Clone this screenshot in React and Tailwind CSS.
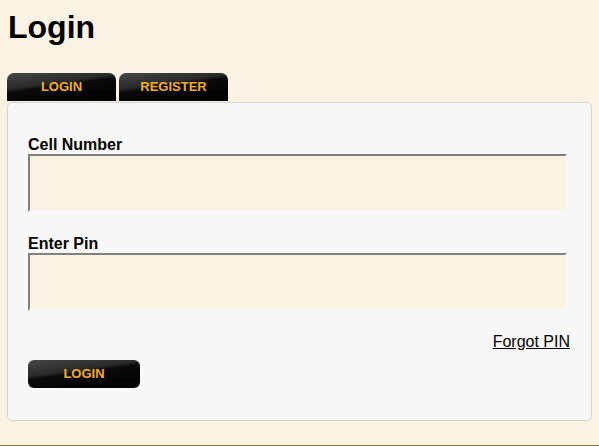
import React from 'react';

const gloss =
  'bg-[linear-gradient(172deg,#474747_0%,#2a2a2a_38%,#0a0a0a_46%,#000_100%)]';

const Tab = ({ label }) => (
  <div
    className={`w-[109px] h-[28px] rounded-t-[7px] ${gloss} flex items-center justify-center text-[13px] font-bold text-[#f4ad22]`}
  >
    {label}
  </div>
);

const Field = ({ label, className = '' }) => (
  <div className={className}>
    <label className="block text-[16px] font-bold text-black leading-[18px]">{label}</label>
    <input
      type="text"
      className="block w-[539px] h-[58px] bg-[#faf3e3] border-2 border-t-[#808080] border-l-[#808080] border-r-[#f8f8f8] border-b-[#f8f8f8] outline-none"
    />
  </div>
);

export default function App() {
  return (
    <div className="w-[599px] h-[446px] bg-[#faf3e3] font-['Liberation_Sans',Arial,sans-serif] flex flex-col">
      <h1 className="text-[32px] font-bold text-black leading-[36px] pl-[8px] pt-[9px]">Login</h1>
      <div className="flex gap-[3px] pl-[7px] mt-[28px]">
        <Tab label="LOGIN" />
        <Tab label="REGISTER" />
      </div>
      <div className="ml-[7px] mt-[1px] w-[585px] h-[319px] bg-[#f8f8f8] border border-[#d4d4d4] rounded-[5px] pl-[20px] pr-[21px] pt-[33px]">
        <Field label="Cell Number" />
        <Field label="Enter Pin" className="mt-[23px]" />
        <div className="flex justify-end mt-[22px]">
          <a href="#" className="text-[16px] text-black underline leading-[18px]">Forgot PIN</a>
        </div>
        <button
          type="button"
          className={`mt-[9px] w-[112px] h-[28px] rounded-[6px] ${gloss} text-[13px] font-bold text-[#f4ad22] flex items-center justify-center`}
        >
          LOGIN
        </button>
      </div>
      <div className="mt-auto h-[1px] bg-[#8a6d2f]" />
    </div>
  );
}
